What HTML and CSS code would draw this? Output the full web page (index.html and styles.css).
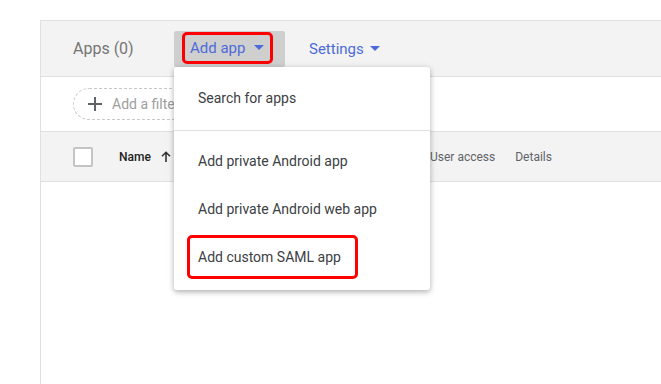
FILE: index.html
```html
<!DOCTYPE html>
<html lang="en">
  <head>
    <meta charset="utf-8" />
    <title>Apps</title>
    <link rel="stylesheet" href="styles.css">
  </head>
  <body>
    <div class="panel">
      <div class="toolbar">
        <span class="toolbar__title">Apps (0)</span>
        <div class="toolbar__btn toolbar__btn--active">
          <span class="mark mark--btn">Add app <i class="caret"></i></span>
        </div>
        <div class="toolbar__btn">
          <span class="toolbar__label">Settings <i class="caret caret--tight"></i></span>
        </div>

        <div class="menu">
          <div class="menu__item">Search for apps</div>
          <div class="menu__divider"></div>
          <div class="menu__item">Add private Android app</div>
          <div class="menu__item">Add private Android web app</div>
          <div class="menu__item menu__item--marked">
            <span class="mark mark--item">Add custom SAML app</span>
          </div>
        </div>
      </div>

      <div class="filters">
        <div class="chip">
          <svg class="chip__plus" width="14" height="14" viewBox="0 0 14 14">
            <path d="M7 0v14M0 7h14" stroke="#5f6368" stroke-width="2" />
          </svg>
          Add a filter
        </div>
      </div>

      <div class="thead">
        <span class="checkbox"></span>
        <span class="thead__name">Name
          <svg class="thead__sort" width="10" height="11" viewBox="0 0 10 11">
            <path d="M5 11V1.5M1 5.3L5 1.3 9 5.3" stroke="#333" stroke-width="1.6" fill="none" />
          </svg>
        </span>
        <span class="thead__col">User access</span>
        <span class="thead__col">Details</span>
      </div>
    </div>
  </body>
</html>
```

FILE: styles.css
```css
:root {
  --color-line: #e0e0e0;
  --color-bar: #f3f3f3;
  --color-blue: #4d6bd8;
  --color-text: #3c4043;
  --color-muted: #757575;
  --color-mark: #f00;
}

html,
body {
  margin: 0;
  height: 100%;
  overflow: hidden;
  background: #fff;
  font-family: Roboto, "Liberation Sans", sans-serif;
}
body {
  padding: 20px 0 0 40px;
  box-sizing: border-box;
}

.panel {
  height: 100%;
  border-top: 1px solid var(--color-line);
  border-left: 1px solid var(--color-line);
}

.toolbar {
  position: relative;
  display: flex;
  align-items: center;
  height: 55px;
  padding-left: 32px;
  background: var(--color-bar);
  border-bottom: 1px solid var(--color-line);
}
.toolbar__title {
  width: 101px;
  font-size: 16px;
  color: var(--color-muted);
}
.toolbar__btn {
  display: flex;
  align-items: center;
  height: 36px;
  width: 111px;
  padding-left: 8px;
  box-sizing: border-box;
  border-radius: 2px;
  font-size: 15px;
  color: var(--color-blue);
}
.toolbar__btn--active {
  background: #cfcfcf;
}
.toolbar__label {
  margin-left: 16px;
  display: flex;
  align-items: center;
}

.caret {
  display: inline-block;
  width: 0;
  height: 0;
  margin-left: 9px;
  border-left: 5px solid transparent;
  border-right: 5px solid transparent;
  border-top: 5px solid var(--color-blue);
}
.caret--tight {
  margin-left: 6px;
}

.mark {
  display: flex;
  align-items: center;
  box-sizing: border-box;
  border: 3px solid var(--color-mark);
  border-radius: 5px;
}
.mark--btn {
  width: 91px;
  height: 32px;
  padding-left: 5px;
  margin-top: -2px;
}
.mark--item {
  width: 171px;
  height: 44px;
  padding-left: 8px;
  margin-left: -11px;
}

.menu {
  position: absolute;
  z-index: 2;
  top: 46px;
  left: 133px;
  width: 256px;
  padding: 7px 0 9px;
  background: #fff;
  border-radius: 3px;
  box-shadow: 0 2px 5px rgba(0, 0, 0, 0.24), 0 1px 9px rgba(0, 0, 0, 0.1);
}
.menu__item {
  display: flex;
  align-items: center;
  height: 48px;
  padding-left: 24px;
  font-size: 14px;
  color: var(--color-text);
}
.menu__divider {
  height: 1px;
  margin: 8px 0 6px;
  background: var(--color-line);
}

.filters {
  display: flex;
  align-items: center;
  height: 54px;
  padding-left: 32px;
  border-bottom: 1px solid var(--color-line);
}
.chip {
  display: flex;
  align-items: center;
  height: 32px;
  width: 140px;
  box-sizing: border-box;
  padding-left: 14px;
  border: 1px dashed #c8c8c8;
  border-radius: 16px;
  font-size: 14px;
  color: #9e9e9e;
}
.chip__plus {
  margin-right: 10px;
}

.thead {
  display: flex;
  align-items: center;
  height: 49px;
  padding-left: 32px;
  background: var(--color-bar);
  border-bottom: 1px solid var(--color-line);
  font-size: 12px;
  color: #5f6368;
}
.checkbox {
  width: 20px;
  height: 20px;
  box-sizing: border-box;
  border: 2px solid #c4c4c4;
  border-radius: 2px;
  background: #fff;
  margin-right: 26px;
}
.thead__name {
  display: flex;
  align-items: center;
  width: 311px;
  font-weight: 500;
  color: #222;
}
.thead__sort {
  margin-left: 10px;
}
.thead__col {
  margin-right: 20px;
}
```
